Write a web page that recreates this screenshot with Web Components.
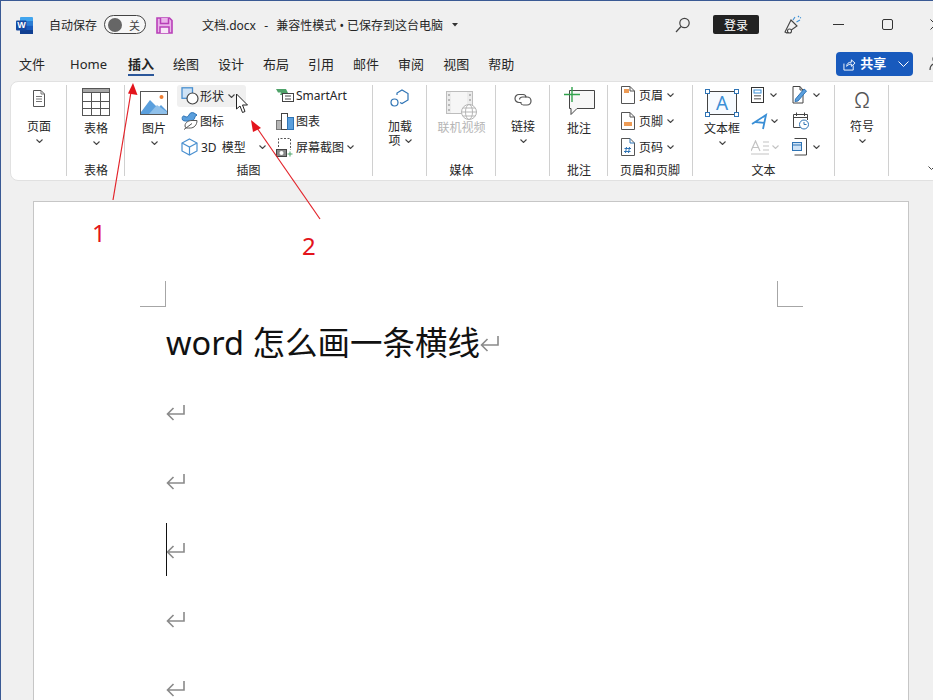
<!DOCTYPE html>
<html lang="zh">
<head>
<meta charset="utf-8">
<title>文档.docx - Word</title>
<style>
  html, body { margin: 0; height: 700px; overflow: hidden; background: #f0f0f0; }
  body { font: 12px "Noto Sans", "Noto Sans CJK SC", sans-serif; color: #262626; }
</style>
</head>
<body>
<word-app></word-app>

<script>
  const FONT = '"Noto Sans", "Noto Sans CJK SC", sans-serif';

  // Inline icons, coordinates are plain screen pixels
  const ICONS = {
    word: '<svg width="18" height="17" viewBox="0 0 18 17"><rect x="4" y="0" width="13" height="17" rx="1" fill="#41a5ee"/><rect x="4" y="4" width="13" height="4.5" fill="#2b7cd3"/><rect x="4" y="8.5" width="13" height="4.5" fill="#185abd"/><rect x="4" y="13" width="13" height="4" fill="#103f91"/><rect x="0" y="3.5" width="10.500" height="10" rx="1" fill="#14489f"/></svg>',
    save: '<svg width="17" height="17" viewBox="0 0 17 17"><path d="M1 1H13.500L16 3.500V16H1Z" fill="#eab4ea" stroke="#b83fb8" stroke-width="1.600"/><path d="M4.500 1V6.500H12.500V1" fill="#eab4ea" stroke="#b83fb8" stroke-width="1.500"/><path d="M4 16V10H13V16" fill="#f8e6f8" stroke="#b83fb8" stroke-width="1.500"/></svg>',
    search: '<svg width="16" height="16" viewBox="0 0 16 16" fill="none" stroke="#444" stroke-width="1.200"><circle cx="9.500" cy="6" r="4.700"/><path d="M6 9.500L1 15"/></svg>',
    pen: '<svg width="18" height="20" viewBox="0 0 18 20" fill="none" stroke="#444" stroke-width="1.100"><path d="M1 17L7 5L13 11L3 18Z"/><circle cx="5.500" cy="16" r="2" fill="#fff"/><path d="M9 5L11 2M12.500 7L16 5" stroke="#3a8fd6"/><path d="M14 2l1-1M16 3l1-.5" stroke="#3a8fd6"/></svg>',
    min: '<svg width="11" height="11" viewBox="0 0 11 11"><path d="M0 5.500H11" stroke="#333" stroke-width="1"/></svg>',
    max: '<svg width="11" height="11" viewBox="0 0 11 11"><rect x=".5" y=".5" width="10" height="10" rx="1.500" fill="none" stroke="#333"/></svg>',
    close: '<svg width="11" height="11" viewBox="0 0 11 11"><path d="M.5 .5L10.500 10.500M10.500 .5L.5 10.500" stroke="#333"/></svg>',
    share: '<svg width="13" height="13" viewBox="0 0 14 14" fill="none" stroke="#fff" stroke-width="1"><path d="M1 6V13H11V8"/><path d="M4 9C4 6 6 4.500 9 4.500V2L13 5.500L9 9V6.500C7 6.500 5 7.500 4 9Z"/></svg>',
    person: '<svg width="14" height="18" viewBox="0 0 14 18" fill="none" stroke="#444" stroke-width="1.200"><circle cx="8" cy="5" r="4"/><path d="M1 16C1 12 3 10 6 9.500"/></svg>',
    page: '<svg width="14" height="17" viewBox="0 0 14 17" fill="none" stroke="#555"><path d="M1.500 .5H9L12.500 4V16.500H1.500Z" fill="#fff"/><path d="M9 .5V4H12.500M4 6.500H10M4 9H10M4 11.500H10" stroke="#777"/></svg>',
    table: '<svg width="28" height="28" viewBox="0 0 28 28" fill="none" stroke="#555"><rect x=".5" y=".5" width="27" height="27" fill="#fff"/><rect x=".5" y=".5" width="27" height="4" fill="#a6a6a6"/><path d="M9.500 4V28M18.500 4V28M0 13.500H28M0 20.500H28"/></svg>',
    picture: '<svg width="28" height="24" viewBox="0 0 28 24"><rect x=".5" y=".5" width="27" height="23" fill="#fff" stroke="#555"/><circle cx="21.500" cy="6" r="2" fill="#ed7d31"/><path d="M1 21L10 9L18 17L21 14L27 20V23H1Z" fill="#5a9fdd"/><path d="M9 23L17 14L27 21V23Z" fill="#8fc0ea"/></svg>',
    shapes: '<svg width="18" height="18" viewBox="0 0 18 18"><rect x="1" y=".8" width="10.500" height="10.500" fill="#cfe3f6" stroke="#4a90d0" stroke-width="1.300"/><circle cx="11.500" cy="11.500" r="5.500" fill="#fff" stroke="#444" stroke-width="1.200"/></svg>',
    icons: '<svg width="18" height="18" viewBox="0 0 18 18" fill="none"><path d="M1.500 8C.5 5 2 3 4 4.500C5.500 5.500 7 5 8 3C8.500 1 11 0 13 1L16 3L14 4.500C14 7 12 9 9 9C6 9 3 9.500 1.500 8Z" fill="#5a9fdd" stroke="#2f74b5"/><path d="M4 14C4 10 8 8.500 11 8.500H16C16 13 13 16 9.500 16C6.500 16 4 16.500 4 14Z" stroke="#555" fill="#fff"/><path d="M3 17.500L11 11.500" stroke="#555"/></svg>',
    cube: '<svg width="17" height="18" viewBox="0 0 17 18" fill="none" stroke="#4a90d0" stroke-width="1.200"><path d="M8.500 1L16 5V13L8.500 17L1 13V5Z" fill="#fff"/><path d="M1 5L8.500 9L16 5M8.500 9V17"/></svg>',
    smartart: '<svg width="18" height="13" viewBox="0 0 18 13"><path d="M0 0H10L12 4H9L8 6H4L5 3.500H2Z" fill="#4fa36a"/><rect x="6.500" y="4.500" width="11" height="8" fill="#fff" stroke="#444"/><path d="M9 7H15M9 10H15" stroke="#444"/></svg>',
    chart: '<svg width="18" height="17" viewBox="0 0 18 17"><rect x=".5" y="7.500" width="5" height="9" fill="#b5b5b5" stroke="#777"/><rect x="5.500" y=".5" width="6" height="16" fill="#fff" stroke="#444"/><rect x="11.500" y="4.500" width="6" height="12" fill="#5a9fdd" stroke="#2f74b5"/></svg>',
    capture: '<svg width="19" height="19" viewBox="0 0 19 19" fill="none"><path d="M2.500 9V.5H14.500V12" stroke="#555" stroke-dasharray="2 1.500"/><path d="M14 13.500V18.500M11.500 16H16.500" stroke="#4fa36a"/><rect x=".5" y="11.500" width="10" height="7" fill="#888" stroke="#444"/><circle cx="5.500" cy="15" r="2" fill="#fff"/></svg>',
    addin: '<svg width="20" height="20" viewBox="0 0 20 20" fill="none" stroke="#2f74b5" stroke-width="1.200"><path d="M7 6V4L12 1L18 4.500V11L12 14.500L10 13.500" /><circle cx="4.500" cy="13.500" r="3.500"/></svg>',
    video: '<svg width="32" height="30" viewBox="0 0 32 30"><rect x=".5" y=".5" width="26" height="22" fill="#ececec" stroke="#bdbdbd"/><rect x="5" y="1" width="16" height="21" fill="#f6f6f6"/><path d="M2 4H4M2 9H4M2 14H4M2 19H4M23 4H25M23 9H25M23 14H25" stroke="#a8a8a8" stroke-width="1.500"/><circle cx="23" cy="21" r="7.500" fill="#fff" stroke="#b5b5b5"/><ellipse cx="23" cy="21" rx="3.500" ry="7.500" fill="none" stroke="#b5b5b5"/><path d="M15.500 21H30.500M17 17H29M17 25H29" stroke="#b5b5b5"/></svg>',
    link: '<svg width="18" height="14" viewBox="0 0 18 14" fill="none" stroke="#555" stroke-width="1.200"><path d="M7.500 9.500H5C2.500 9.500 1 7.500 1 5.500S2.500 1.500 5 1.500H9C11 1.500 12 3 12 4.500"/><path d="M5.500 6.500C5.500 5 7 4 8.500 4H13C15.500 4 17 6 17 8S15.500 12 13 12H9.500C8 12 7 11 6.800 10"/></svg>',
    comment: '<svg width="31" height="29" viewBox="0 0 31 29"><path d="M5.500 3.500H30.500V21.500H13L7 27.500V21.500H5.500Z" fill="#f7f7f7" stroke="#444"/><path d="M8 0V15M0 7.500H16" stroke="#31a24c" stroke-width="1.400"/></svg>',
    header: '<svg width="14" height="18" viewBox="0 0 14 18"><path d="M.5 .5H9L13.500 5V17.500H.5Z" fill="#fff" stroke="#555"/><path d="M9 .5V5H13.500" fill="none" stroke="#555"/><rect x="3" y="3" width="5" height="4" fill="#ed9b55"/></svg>',
    footer: '<svg width="14" height="18" viewBox="0 0 14 18"><path d="M.5 .5H9L13.500 5V17.500H.5Z" fill="#fff" stroke="#555"/><path d="M9 .5V5H13.500" fill="none" stroke="#555"/><rect x="3" y="10" width="8" height="4" fill="#ed9b55"/></svg>',
    pagenum: '<svg width="14" height="18" viewBox="0 0 14 18"><path d="M.5 .5H9L13.500 5V17.500H.5Z" fill="#fff" stroke="#555"/><path d="M9 .5V5H13.500M5.500 9L4.500 15M8.500 9L7.500 15M3.500 10.500H10M3 13.500H9.500" fill="none" stroke="#2f74b5"/></svg>',
    quick: '<svg width="13" height="16" viewBox="0 0 13 16"><rect x=".5" y=".5" width="12" height="15" fill="#fff" stroke="#333"/><rect x="3" y="3" width="7" height="3" fill="#fff" stroke="#3a8fd6"/><rect x="3" y="8" width="7" height="1.500" fill="#888"/><rect x="3" y="11" width="7" height="1.500" fill="#888"/></svg>',
    art: '<svg width="17" height="17" viewBox="0 0 17 17" fill="none" stroke="#3a8fd6" stroke-width="1.800"><path d="M1 11L15 2L12 16M4.500 9L13.500 10"/></svg>',
    drop: '<svg width="19" height="15" viewBox="0 0 19 15" fill="none" stroke="#c3c3c3" stroke-width="1.200"><path d="M0 11L4.500 1L9 11M2 7.500H7M0 14H18M12 2H18M12 6H18M12 10H18"/></svg>',
    sign: '<svg width="15" height="18" viewBox="0 0 15 18" fill="none"><path d="M1 .5H8L11 4V17H1Z" stroke="#444" fill="#fff"/><path d="M8 .5V4H11" stroke="#444"/><path d="M3.500 13L12 3L14.500 5L6 15L3 15.500Z" fill="#5a9fdd" stroke="#2f74b5"/></svg>',
    date: '<svg width="17" height="18" viewBox="0 0 17 18" fill="none" stroke="#444"><path d="M9 15.500H1.500V2.500H15.500V8"/><path d="M1.500 5.500H15.500M4.500 .5V4M12.500 .5V4"/><circle cx="12" cy="12.500" r="4.500" stroke="#2f74b5" fill="#fff"/><path d="M12 10V12.500H14.500" stroke="#2f74b5"/></svg>',
    object: '<svg width="15" height="18" viewBox="0 0 15 18" fill="none" stroke="#444"><path d="M2.500 .5H14.500V17H2.500"/><rect x=".5" y="4.500" width="9" height="8" fill="#cfe3f6" stroke="#2f74b5"/><path d="M0 7H10" stroke="#2f74b5"/></svg>'
  };

  const chevron = (color = '#444') =>
    `<svg width="7" height="4" viewBox="0 0 7 4" fill="none" stroke="${color}" stroke-width="1.100"><path d="M.5 .5L3.500 3.500L6.500 .5"/></svg>`;

  // Small base class: every element just renders a style and markup in its shadow root
  class Base extends HTMLElement {
    constructor() {
      super();
      this.attachShadow({mode: 'open'});
    }
    connectedCallback() {
      this.shadowRoot.innerHTML = `<style>${this.css()}</style>${this.html()}`;
    }
    css() { return ':host { display: block; }'; }
    html() { return '<slot></slot>'; }
  }

  class AppIcon extends Base {
    css() { return ':host { display: inline-flex; flex: none; }'; }
    html() { return ICONS[this.getAttribute('name')] + '<slot></slot>'; }
  }

  class TitleBar extends Base {
    css() {
      return `
        :host { display: flex; align-items: center; height: 47px; padding-left: 15px; font-size: 12px; white-space: nowrap; width: 960px; }
        .word { position: relative; display: flex; margin-top: 1px; }
        .word b { position: absolute; left: 0; top: 3px; width: 11px; text-align: center; color: #fff; font: bold 9px/11px "Liberation Sans", sans-serif; }
        .auto { margin-left: 15px; width: 55px; }
        .toggle { box-sizing: border-box; width: 42px; height: 19px; border: 1.500px solid #444; border-radius: 10px; display: flex; align-items: center; padding-left: 3px; background: #f7f7f7; }
        .knob { width: 14px; height: 14px; border-radius: 50%; background: #666; }
        .toggle span { margin-left: 7px; font-size: 11px; color: #444; }
        .save { margin-left: 10px; margin-top: 1px; }
        .doc { margin-left: 29px; width: 250px; }
        .dash { margin: 0 2px; }
        .caret { display: flex; margin-top: 1px; }
        .search { margin-left: 217px; }
        .login { margin-left: 22px; width: 46px; height: 19px; background: #222; color: #fff; border-radius: 2px; display: flex; align-items: center; justify-content: center; font-size: 12px; }
        .pen { margin-left: 25px; }
        .min { margin-left: 31px; }
        .max { margin-left: 38px; }
        .close { margin-left: 37px; }
      `;
    }
    html() {
      return `
        <span class="word"><app-icon name="word"></app-icon><b>W</b></span>
        <span class="auto">自动保存</span>
        <span class="toggle"><i class="knob"></i><span>关</span></span>
        <app-icon class="save" name="save"></app-icon>
        <span class="doc">文档.docx&nbsp; <span class="dash">-</span> &nbsp;兼容性模式 • 已保存到这台电脑</span>
        <span class="caret"><svg width="6" height="4" viewBox="0 0 6 4"><path d="M0 0H6L3 3.500Z" fill="#333"/></svg></span>
        <app-icon class="search" name="search"></app-icon>
        <span class="login">登录</span>
        <app-icon class="pen" name="pen"></app-icon>
        <app-icon class="min" name="min"></app-icon>
        <app-icon class="max" name="max"></app-icon>
        <app-icon class="close" name="close"></app-icon>
      `;
    }
  }

  class TabBar extends Base {
    css() {
      return `
        :host { display: flex; align-items: flex-start; height: 33px; padding-left: 18px; font-size: 13px; line-height: 18px; white-space: nowrap; width: 960px; box-sizing: border-box; }
        a { display: block; margin-top: 7px; margin-right: 19px; height: 21px; }
        a.home { margin-left: 6px; margin-right: 21px; }
        a.on { font-weight: 700; box-shadow: inset 0 -2px 0 #2b579a; }
        .share { margin-left: 303px; margin-top: 4px; width: 77px; height: 24px; box-sizing: border-box; border-radius: 4px; background: #185abd; color: #fff; display: flex; align-items: center; padding-left: 7px; font-weight: 700; font-size: 13px; }
        .share span { margin-left: 4px; width: 38px; padding-bottom: 2px; }
        .person { margin-left: 16px; margin-top: 6px; }
      `;
    }
    html() {
      return `
        <a>文件</a><a class="home">Home</a><a class="on">插入</a><a>绘图</a><a>设计</a><a>布局</a><a>引用</a><a>邮件</a><a>审阅</a><a>视图</a><a>帮助</a>
        <div class="share"><app-icon name="share"></app-icon><span>共享</span><svg width="11" height="6" viewBox="0 0 11 6" fill="none" stroke="#fff"><path d="M.5 .5L5.500 5.500L10.500 .5"/></svg></div>
        <app-icon class="person" name="person"></app-icon>
      `;
    }
  }

  class RibbonGroup extends Base {
    css() {
      return `
        :host { display: grid; grid-template-rows: 75px 16px; flex: none; box-sizing: border-box; height: 91px; border-right: 1px solid #d0d0d0; width: var(--w); }
        .body { display: flex; height: 78px; margin-top: -3px; }
        .label { text-align: center; font-size: 12px; line-height: 16px; margin-top: 3px; white-space: nowrap; }
      `;
    }
    html() {
      const label = this.getAttribute('label');
      return `<div class="body"><slot></slot></div><div class="label">${label || ''}</div>`;
    }
  }

  class BigButton extends Base {
    css() {
      return `
        :host { display: flex; flex-direction: column; align-items: center; flex: none; width: var(--w, 100%); line-height: 14px; font-size: 12px; white-space: nowrap; }
        .icon { height: var(--ah, 38px); box-sizing: border-box; padding-top: var(--it, 8px); display: flex; justify-content: center; }
        .chev { height: 14px; display: flex; align-items: center; }
        .inline { display: inline-flex; align-items: center; gap: 4px; }
      `;
    }
    html() {
      const name = this.getAttribute('icon');
      const lines = this.getAttribute('label').split('|');
      const hasChev = this.hasAttribute('chev');
      const last = lines.length - 1;
      const text = lines.map((l, i) => i === last && lines.length > 1
        ? `<span class="inline">${l}${chevron()}</span>` : `<span>${l}</span>`).join('');
      return `
        <div class="icon">${name ? `<app-icon name="${name}"></app-icon>` : '<slot></slot>'}</div>
        ${text}
        ${hasChev && lines.length === 1 ? `<div class="chev">${chevron()}</div>` : ''}
      `;
    }
  }

  class SmallButton extends Base {
    css() {
      return `
        :host { display: flex; align-items: center; flex: none; box-sizing: border-box; height: 26px; white-space: nowrap; font-size: 12px; padding-left: var(--pl, 0); }
        .lbl { margin-left: var(--g, 4px); }
        .chev { margin-left: var(--c, 4px); display: flex; }
        :host([dim]) { color: #b5b5b5; }
      `;
    }
    html() {
      const label = this.getAttribute('label');
      const chev = this.hasAttribute('chev');
      const color = this.hasAttribute('dim') ? '#c3c3c3' : '#444';
      return `
        <app-icon name="${this.getAttribute('icon')}"></app-icon>
        ${label ? `<span class="lbl">${label}</span>` : ''}
        ${chev ? `<span class="chev">${chevron(color)}</span>` : ''}
      `;
    }
  }

  class ButtonColumn extends Base {
    css() {
      return ':host { display: flex; flex-direction: column; flex: none; box-sizing: border-box; width: var(--w); }';
    }
  }

  class RibbonBar extends Base {
    css() {
      return `
        :host { display: flex; box-sizing: border-box; height: 100px; margin-left: 9px; width: 940px; padding-top: 3px; background: #fff; border: 1px solid #e1e1e1; border-radius: 8px; }
      `;
    }
  }

  class DocPage extends Base {
    css() {
      return `
        :host { display: block; box-sizing: border-box; margin: 20px 0 0 32px; width: 876px; height: 520px; background: #fff; border: 1px solid #c6c6c6; border-bottom: 0; padding: 79px 105px 0 106px; overflow: hidden; }
        .marks { display: flex; justify-content: space-between; height: 26px; }
        .marks i { display: block; width: 25px; height: 25px; border-bottom: 1px solid #a6a6a6; }
        .marks i:first-child { border-right: 1px solid #a6a6a6; }
        .marks i:last-child { border-left: 1px solid #a6a6a6; }
        .text { padding: 3px 0 0 26px; }
      `;
    }
    html() {
      return `<div class="marks"><i></i><i></i></div><div class="text"><slot></slot></div>`;
    }
  }

  class DocPara extends Base {
    css() {
      return `
        :host { display: flex; align-items: center; height: 69px; font-size: 32.5px; color: #111; white-space: nowrap; position: relative; }
        .cursor { position: absolute; left: 0; top: 6px; width: 1px; height: 53px; background: #111; }
        .wrap { margin-top: -3px; line-height: 44px; }
        svg { display: block; flex: none; margin-top: -2px; }
      `;
    }
    html() {
      return `
        ${this.hasAttribute('cursor') ? '<i class="cursor"></i>' : ''}
        <span class="wrap"><slot></slot></span>
        <svg width="20" height="17" viewBox="1 0 20 17" fill="none" stroke="#8a8a8a" stroke-width="1.600"><path d="M19 1V10H2.500M8.500 4L2.500 10L8.500 16"/></svg>
      `;
    }
  }

  // Red arrows, numbers and the mouse pointer lie over the window
  class NoteLayer extends Base {
    css() {
      return `
        :host { position: absolute; left: -1px; top: -1px; width: 933px; height: 700px; pointer-events: none; }
        svg { position: absolute; left: 0; top: 0; }
        span { position: absolute; color: #e3141c; font: 24px/28px ${FONT}; }
      `;
    }
    html() {
      return `
        <svg width="933" height="700" viewBox="0 0 933 700">
          <path d="M113 200L131 92" stroke="#e3242b" stroke-width="1.200" fill="none"/>
          <path d="M133 83L137.500 95L128 93.500Z" fill="#e3141c"/>
          <path d="M320 219L257 128" stroke="#e3242b" stroke-width="1.200" fill="none"/>
          <path d="M251 120L261 128L253 132Z" fill="#e3141c"/>
          <path d="M236.500 94V109L240 106L242.500 112.500L245 111.500L242.500 105L247.500 105Z" fill="#fff" stroke="#222" stroke-width="1"/>
        </svg>
        <span style="left:92px;top:219px">1</span>
        <span style="left:302px;top:232px">2</span>
      `;
    }
  }

  class WordApp extends Base {
    css() {
      return `
        :host { display: block; box-sizing: border-box; width: 933px; height: 700px; overflow: hidden; position: relative; background: #f0f0f0; border-top: 1px solid #3a5a94; border-left: 1px solid #3a5a94; font: 12px ${FONT}; color: #262626; }
        .tail { position: absolute; left: 927px; top: 165px; }
        .omega { font: 300 21px/21px Inter, "Noto Sans", sans-serif; color: #555; }
        .tbox { position: relative; box-sizing: border-box; width: 30px; height: 24px; border: 1px solid #444; background: #f7fbff; color: #3a8fd6; font-size: 19px; line-height: 22px; text-align: center; }
        .tbox i { position: absolute; width: 3px; height: 3px; border: 1px solid #2f74b5; background: #fff; }
      `;
    }
    html() {
      return `
        <title-bar></title-bar>
        <tab-bar></tab-bar>
        <ribbon-bar>
          <ribbon-group style="--w:56px">
            <big-button icon="page" label="页面" chev style="--it:8px;--ah:38px"></big-button>
          </ribbon-group>
          <ribbon-group label="表格" style="--w:58px">
            <big-button icon="table" label="表格" chev style="--it:6px;--ah:40px"></big-button>
          </ribbon-group>
          <ribbon-group label="插图" style="--w:248px">
            <big-button icon="picture" label="图片" chev style="--w:46px;margin-left:6px;--it:9px;--ah:40px"></big-button>
            <button-column style="--w:99px">
              <small-button icon="shapes" label="形状" chev style="--pl:4px;--g:1px;--c:4px;background:#f0f0f0;border-radius:3px;width:69px;height:22px;margin:3px 0 1px"></small-button>
              <small-button icon="icons" label="图标" style="--pl:4px;--g:1px"></small-button>
              <small-button icon="cube" label="3D 模型" chev style="--pl:4px;--g:3px;--c:13px;word-spacing:2px"></small-button>
            </button-column>
            <button-column style="--w:90px">
              <small-button icon="smartart" label="SmartArt" style="--g:2px"></small-button>
              <small-button icon="chart" label="图表" style="--g:2px"></small-button>
              <small-button icon="capture" label="屏幕截图" chev style="--g:1px;--c:3px"></small-button>
            </button-column>
          </ribbon-group>
          <ribbon-group style="--w:54px" label="&nbsp;">
            <big-button icon="addin" label="加载|项" style="--it:7px;--ah:38px"></big-button>
          </ribbon-group>
          <ribbon-group label="媒体" style="--w:69px">
            <big-button icon="video" label="<span style='color:#b5b5b5'>联机视频</span>" style="--it:9px;--ah:39px"></big-button>
          </ribbon-group>
          <ribbon-group style="--w:54px" label="&nbsp;">
            <big-button icon="link" label="链接" chev style="--it:11px;--ah:38px"></big-button>
          </ribbon-group>
          <ribbon-group label="批注" style="--w:58px">
            <big-button icon="comment" label="批注" style="--it:5px;--ah:40px"></big-button>
          </ribbon-group>
          <ribbon-group label="页眉和页脚" style="--w:85px">
            <button-column style="--w:84px;padding-left:13px">
              <small-button icon="header" label="页眉" chev></small-button>
              <small-button icon="footer" label="页脚" chev></small-button>
              <small-button icon="pagenum" label="页码" chev></small-button>
            </button-column>
          </ribbon-group>
          <ribbon-group label="文本" style="--w:142px">
            <big-button label="文本框" chev style="--w:58px;--it:9px;--ah:40px">
              <div class="tbox">A<i style="left:-3px;top:-3px"></i><i style="right:-3px;top:-3px"></i><i style="left:-3px;bottom:-3px"></i><i style="right:-3px;bottom:-3px"></i></div>
            </big-button>
            <button-column style="--w:41px">
              <small-button icon="quick" chev style="--c:6px"></small-button>
              <small-button icon="art" chev style="--c:3px"></small-button>
              <small-button icon="drop" dim chev style="--c:2px"></small-button>
            </button-column>
            <button-column style="--w:42px">
              <small-button icon="sign" chev style="--c:6px"></small-button>
              <small-button icon="date"></small-button>
              <small-button icon="object" chev style="--c:6px"></small-button>
            </button-column>
          </ribbon-group>
          <ribbon-group style="--w:54px" label="&nbsp;">
            <big-button label="符号" chev style="--it:8px;--ah:38px"><span class="omega">Ω</span></big-button>
          </ribbon-group>
        </ribbon-bar>
        <svg class="tail" width="7" height="4" viewBox="0 0 7 4" fill="none" stroke="#444"><path d="M.5 .5L3.500 3.500L6.500 .5"/></svg>
        <doc-page>
          <doc-para>word 怎么画一条横线</doc-para>
          <doc-para></doc-para>
          <doc-para></doc-para>
          <doc-para cursor></doc-para>
          <doc-para></doc-para>
          <doc-para></doc-para>
        </doc-page>
        <note-layer></note-layer>
      `;
    }
  }

  customElements.define('app-icon', AppIcon);
  customElements.define('title-bar', TitleBar);
  customElements.define('tab-bar', TabBar);
  customElements.define('ribbon-group', RibbonGroup);
  customElements.define('big-button', BigButton);
  customElements.define('small-button', SmallButton);
  customElements.define('button-column', ButtonColumn);
  customElements.define('ribbon-bar', RibbonBar);
  customElements.define('doc-page', DocPage);
  customElements.define('doc-para', DocPara);
  customElements.define('note-layer', NoteLayer);
  customElements.define('word-app', WordApp);
</script>
</body>
</html>
